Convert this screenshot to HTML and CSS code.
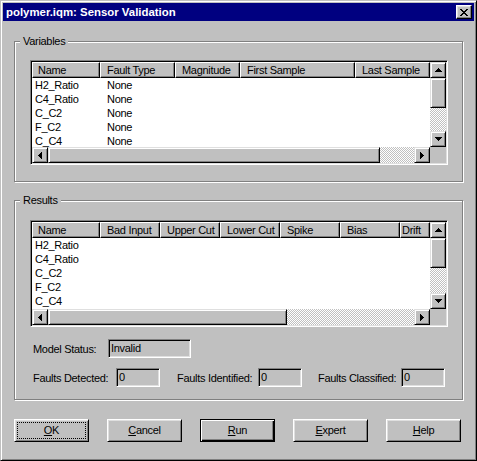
FILE: index.html
```html
<!DOCTYPE html>
<html>
<head>
<meta charset="utf-8">
<title>Sensor Validation</title>
<link rel="stylesheet" href="styles.css">
</head>
<body>
<div class="window">
  <div class="titlebar">
    <span class="title">polymer.iqm: Sensor Validation</span>
    <span class="close"><svg width="8" height="7" viewBox="0 0 8 7" shape-rendering="crispEdges"><path fill="#000" d="M0 0h2v1H0z M6 0h2v1H6z M1 1h2v1H1z M5 1h2v1H5z M2 2h4v1H2z M3 3h2v1H3z M2 4h4v1H2z M1 5h2v1H1z M5 5h2v1H5z M0 6h2v1H0z M6 6h2v1H6z"/></svg></span>
  </div>
  <div class="client">
    <fieldset class="group group-vars">
      <legend>Variables</legend>
      <div class="list list-vars">
        <div class="list-main">
          <div class="hdr">
            <div class="hc hc-first w68">Name</div>
            <div class="hc w75">Fault Type</div>
            <div class="hc w65">Magnitude</div>
            <div class="hc w115">First Sample</div>
            <div class="hc w75">Last Sample</div>
          </div>
          <div class="rows">
            <div class="row"><span class="c1">H2_Ratio</span><span class="c2">None</span></div>
            <div class="row"><span class="c1">C4_Ratio</span><span class="c2">None</span></div>
            <div class="row"><span class="c1">C_C2</span><span class="c2">None</span></div>
            <div class="row"><span class="c1">F_C2</span><span class="c2">None</span></div>
            <div class="row"><span class="c1">C_C4</span><span class="c2">None</span></div>
          </div>
        </div>
        <div class="vscroll">
          <div class="sbtn"><svg width="7" height="4" viewBox="0 0 7 4" shape-rendering="crispEdges"><path d="M3 0h1v1H3z M2 1h3v1H2z M1 2h5v1H1z M0 3h7v1H0z"/></svg></div>
          <div class="thumb vthumb"></div>
          <div class="track"></div>
          <div class="sbtn"><svg width="7" height="4" viewBox="0 0 7 4" shape-rendering="crispEdges"><path d="M0 0h7v1H0z M1 1h5v1H1z M2 2h3v1H2z M3 3h1v1H3z"/></svg></div>
        </div>
        <div class="hscroll">
          <div class="sbtn"><svg width="4" height="7" viewBox="0 0 4 7" shape-rendering="crispEdges"><path d="M0 3h1v1H0z M1 2h1v3H1z M2 1h1v5H2z M3 0h1v7H3z"/></svg></div>
          <div class="thumb hthumb-vars"></div>
          <div class="track"></div>
          <div class="sbtn"><svg width="4" height="7" viewBox="0 0 4 7" shape-rendering="crispEdges"><path d="M3 3h1v1H3z M2 2h1v3H2z M1 1h1v5H1z M0 0h1v7H0z"/></svg></div>
        </div>
        <div class="corner"></div>
      </div>
    </fieldset>

    <fieldset class="group group-results">
      <legend>Results</legend>
      <div class="list list-results">
        <div class="list-main">
          <div class="hdr">
            <div class="hc hc-first w68">Name</div>
            <div class="hc w60">Bad Input</div>
            <div class="hc w60">Upper Cut</div>
            <div class="hc w60">Lower Cut</div>
            <div class="hc w60">Spike</div>
            <div class="hc w60">Bias</div>
            <div class="hc hc-tight w30">Drift</div>
          </div>
          <div class="rows">
            <div class="row"><span class="c1">H2_Ratio</span></div>
            <div class="row"><span class="c1">C4_Ratio</span></div>
            <div class="row"><span class="c1">C_C2</span></div>
            <div class="row"><span class="c1">F_C2</span></div>
            <div class="row"><span class="c1">C_C4</span></div>
          </div>
        </div>
        <div class="vscroll">
          <div class="sbtn"><svg width="7" height="4" viewBox="0 0 7 4" shape-rendering="crispEdges"><path d="M3 0h1v1H3z M2 1h3v1H2z M1 2h5v1H1z M0 3h7v1H0z"/></svg></div>
          <div class="thumb vthumb"></div>
          <div class="track"></div>
          <div class="sbtn"><svg width="7" height="4" viewBox="0 0 7 4" shape-rendering="crispEdges"><path d="M0 0h7v1H0z M1 1h5v1H1z M2 2h3v1H2z M3 3h1v1H3z"/></svg></div>
        </div>
        <div class="hscroll">
          <div class="sbtn"><svg width="4" height="7" viewBox="0 0 4 7" shape-rendering="crispEdges"><path d="M0 3h1v1H0z M1 2h1v3H1z M2 1h1v5H2z M3 0h1v7H3z"/></svg></div>
          <div class="thumb hthumb-results"></div>
          <div class="track"></div>
          <div class="sbtn"><svg width="4" height="7" viewBox="0 0 4 7" shape-rendering="crispEdges"><path d="M3 3h1v1H3z M2 2h1v3H2z M1 1h1v5H1z M0 0h1v7H0z"/></svg></div>
        </div>
        <div class="corner"></div>
      </div>

      <div class="srow srow-model">
        <span class="lbl lbl-model">Model Status:</span>
        <span class="field field-model">Invalid</span>
      </div>
      <div class="srow srow-faults">
        <span class="lbl lbl-detected">Faults Detected:</span>
        <span class="field field-small">0</span>
        <span class="lbl lbl-identified">Faults Identified:</span>
        <span class="field field-small">0</span>
        <span class="lbl lbl-classified">Faults Classified:</span>
        <span class="field field-small">0</span>
      </div>
    </fieldset>

    <div class="buttons">
      <div class="btn"><span class="focus"><u>O</u>K</span></div>
      <div class="btn"><span class="blabel"><u>C</u>ancel</span></div>
      <div class="btn btn-default"><span class="blabel"><u>R</u>un</span></div>
      <div class="btn"><span class="blabel"><u>E</u>xpert</span></div>
      <div class="btn"><span class="blabel"><u>H</u>elp</span></div>
    </div>
  </div>
</div>
</body>
</html>
```

FILE: styles.css
```css
* { box-sizing: border-box; }
html, body { margin: 0; padding: 0; }
body {
  font-family: "Liberation Sans", Arial, sans-serif;
  font-size: 11px;
  letter-spacing: -0.3px;
  color: #000;
  background: #c0c0c0;
  width: 477px;
  height: 461px;
  overflow: hidden;
}
.window {
  width: 477px;
  height: 461px;
  border: 1px solid;
  border-color: #c0c0c0 #000 #000 #c0c0c0;
  box-shadow: inset 1px 1px #fff, inset -1px -1px #808080;
  padding: 2px;
  background: #c0c0c0;
  display: flex;
  flex-direction: column;
}
.titlebar {
  height: 18px;
  flex: none;
  background: #000080;
  color: #fff;
  display: flex;
  align-items: center;
  justify-content: space-between;
  padding: 0 2px 0 3px;
}
.title {
  font-weight: bold;
  font-size: 11.4px;
  letter-spacing: 0;
  line-height: 13px;
  white-space: nowrap;
}
.close {
  width: 16px;
  height: 14px;
  border: 1px solid;
  border-color: #fff #000 #000 #fff;
  box-shadow: inset -1px -1px #808080, inset 1px 1px #dfdfdf;
  background: #c0c0c0;
  display: flex;
  align-items: center;
  justify-content: center;
}
.close svg { display: block; }

.client {
  padding: 14px 0 0 11px;
  display: flex;
  flex-direction: column;
}
fieldset.group {
  width: 449px;
  margin: 0;
  padding: 0;
  min-inline-size: 0;
  border: 1px solid #808080;
  box-shadow: inset 1px 1px #fff, 1px 1px #fff;
}
legend {
  margin-left: 5px;
  padding: 0 3px;
  line-height: 13px;
  background: #c0c0c0;
}
.group-vars { padding-bottom: 0; }
.group-results { margin-top: 12px !important; padding-bottom: 12px !important; }

.list {
  width: 418px;
  border: 1px solid;
  border-color: #808080 #fff #fff #808080;
  box-shadow: inset 1px 1px #000, inset -1px -1px #dfdfdf;
  padding: 1px;
  background: #fff;
  display: grid;
  grid-template-columns: 1fr 16px;
  grid-template-rows: 1fr 16px;
  margin-left: 15px;
}
.list-vars { height: 105px; margin-top: 12px; margin-bottom: 16px; }
.list-results { height: 107px; margin-top: 13px; }

.list-main { overflow: hidden; min-width: 0; }
.hdr { display: flex; height: 16px; overflow: hidden; white-space: nowrap; }
.hc {
  flex: none;
  height: 16px;
  border: 1px solid;
  border-color: #fff #000 #000 #fff;
  box-shadow: inset -1px -1px #808080;
  background: #c0c0c0;
  padding-left: 6px;
  line-height: 14px;
  overflow: hidden;
}
.hc-first { padding-left: 5px; }
.hc-tight { padding-left: 1px; }
.w30 { width: 30px; }
.w60 { width: 60px; }
.w65 { width: 65px; }
.w68 { width: 68px; }
.w75 { width: 75px; }
.w115 { width: 115px; }

.rows { overflow: hidden; }
.row { display: flex; height: 14px; line-height: 14px; white-space: nowrap; }
.c1 { width: 68px; padding-left: 3px; flex: none; }
.c2 { padding-left: 7px; }

.vscroll { display: flex; flex-direction: column; }
.hscroll { display: flex; }
.sbtn, .thumb {
  flex: none;
  border: 1px solid;
  border-color: #dfdfdf #000 #000 #dfdfdf;
  box-shadow: inset 1px 1px #fff, inset -1px -1px #808080;
  background: #c0c0c0;
}
.sbtn {
  width: 16px;
  height: 16px;
  display: flex;
  align-items: center;
  justify-content: center;
}
.sbtn svg { display: block; }
.vthumb { height: 30px; width: 16px; }
.hthumb-vars { width: 332px; height: 16px; }
.hthumb-results { width: 239px; height: 16px; }
.track {
  flex: 1;
  background-color: #fff;
  background-image: conic-gradient(#c0c0c0 25%, #fff 0 50%, #c0c0c0 0 75%, #fff 0);
  background-size: 2px 2px;
}
.corner { background: #c0c0c0; }

.srow {
  display: flex;
  align-items: center;
  height: 19px;
  margin-left: 18px;
  white-space: nowrap;
}
.srow-model { margin-top: 12px; }
.srow-faults { margin-top: 10px; }
.lbl { flex: none; }
.lbl-model { width: 75px; }
.lbl-detected { width: 83px; }
.lbl-identified { width: 81px; margin-left: 17px; }
.lbl-classified { width: 83px; margin-left: 16px; }
.field {
  flex: none;
  height: 19px;
  border: 1px solid;
  border-color: #808080 #fff #fff #808080;
  box-shadow: inset 1px 1px #000, inset -1px -1px #dfdfdf;
  padding-left: 2px;
  line-height: 17px;
  background: #c0c0c0;
}
.field-model { width: 83px; }
.field-small { width: 44px; }

.buttons {
  margin-top: 19px;
  width: 447px;
  display: flex;
  justify-content: space-between;
}
.btn {
  width: 75px;
  height: 23px;
  border: 1px solid;
  border-color: #fff #000 #000 #fff;
  box-shadow: inset 1px 1px #dfdfdf, inset -1px -1px #808080;
  background: #c0c0c0;
  display: flex;
  align-items: center;
  justify-content: center;
  line-height: 13px;
}
.btn-default {
  border-color: #000;
  box-shadow: inset 1px 1px #fff, inset -1px -1px #000, inset -2px -2px #808080;
}
.focus {
  flex: 1;
  align-self: stretch;
  margin: 2px 2px 2px 2px;
  border: 1px dotted #000;
  display: flex;
  align-items: center;
  justify-content: center;
}
.btn u, .focus u { text-decoration: underline; }
```
